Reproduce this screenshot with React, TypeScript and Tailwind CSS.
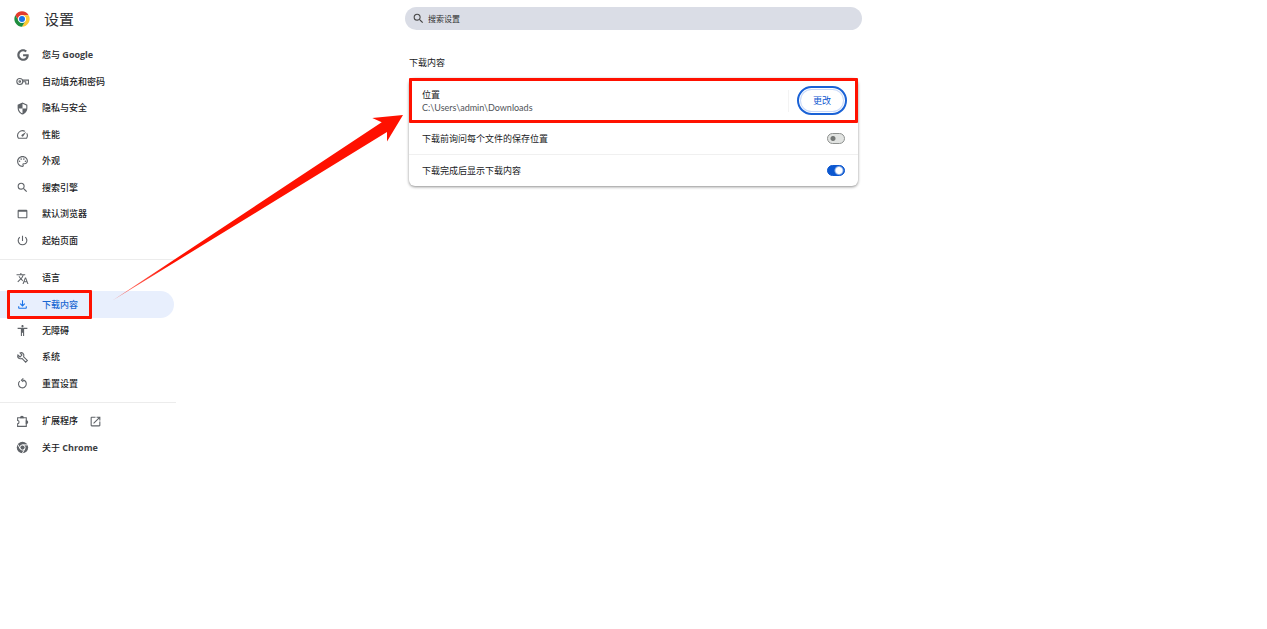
import { useState, type ReactNode } from "react";
import { FaGoogle } from "react-icons/fa";
import {
  MdAccessibility,
  MdOpenInNew,
  MdOutlineFileDownload,
  MdOutlinePalette,
  MdOutlineSpeed,
  MdOutlineWebAsset,
  MdPowerSettingsNew,
  MdSearch,
  MdSecurity,
  MdTranslate,
} from "react-icons/md";

type NavItem = {
  label: string;
  brand?: string;
  icon: ReactNode;
  active?: boolean;
  external?: boolean;
};

function StrokeIcon({ children }: { children: ReactNode }) {
  return (
    <svg
      viewBox="0 0 24 24"
      fill="none"
      stroke="currentColor"
      strokeWidth="2"
      className="size-[13px]"
    >
      {children}
    </svg>
  );
}

const browserItems: NavItem[] = [
  { label: "您与", brand: "Google", icon: <FaGoogle className="size-3" /> },
  {
    label: "自动填充和密码",
    icon: (
      <StrokeIcon>
        <circle cx="7" cy="12" r="5.500" />
        <circle cx="7" cy="12" r="1.500" />
        <path d="M12 9.500H23v7h-5v-4h-5.500" />
      </StrokeIcon>
    ),
  },
  {
    label: "隐私与安全",
    icon: <MdSecurity className="size-[13px] -scale-x-100" />,
  },
  { label: "性能", icon: <MdOutlineSpeed className="size-[13px]" /> },
  { label: "外观", icon: <MdOutlinePalette className="size-[13px]" /> },
  { label: "搜索引擎", icon: <MdSearch className="size-[13px]" /> },
  { label: "默认浏览器", icon: <MdOutlineWebAsset className="size-3.5" /> },
  { label: "起始页面", icon: <MdPowerSettingsNew className="size-[13px]" /> },
];

const advancedItems: NavItem[] = [
  { label: "语言", icon: <MdTranslate className="size-[13px]" /> },
  {
    label: "下载内容",
    active: true,
    icon: <MdOutlineFileDownload className="size-[13px]" />,
  },
  { label: "无障碍", icon: <MdAccessibility className="size-[13px]" /> },
  {
    label: "系统",
    icon: (
      <StrokeIcon>
        <path d="M7.500 3.500l3.500 4-3.500 3.500-4-3.500c-1 3 .5 5.500 3 6.500 1.500.5 3.200.4 4.500-.2l6.800 6.900 3.200-3.200-6.900-6.800c.9-2.300.4-4.700-1.100-6.200-1.500-1.500-3.500-1.800-5.500-1z" />
      </StrokeIcon>
    ),
  },
  {
    label: "重置设置",
    icon: (
      <StrokeIcon>
        <path d="M7 7.500A7.200 7.200 0 1 0 19 13c0-3.800-3-7-7-7.200" />
        <path d="M13.500 2.500L10 5.800l3.500 3.400" />
      </StrokeIcon>
    ),
  },
];

const moreItems: NavItem[] = [
  {
    label: "扩展程序",
    external: true,
    icon: (
      <StrokeIcon>
        <path d="M3 5h16v16H3v-5c3.500 0 3.500-6 0-6z" />
        <path
          d="M8.500 5a2.500 2.500 0 0 1 5 0zM19 10.500a2.500 2.500 0 0 1 0 5z"
          fill="currentColor"
        />
      </StrokeIcon>
    ),
  },
  {
    label: "关于",
    brand: "Chrome",
    icon: (
      <svg viewBox="0 0 24 24" className="size-[13px]">
        <circle cx="12" cy="12" r="10.500" fill="currentColor" />
        <g fill="none" stroke="#fff" strokeWidth="1.800">
          <circle cx="12" cy="12" r="4.800" />
          <path d="M12 7.200h10M7.800 14.400L3 6M16.200 14.400L11.500 23" />
        </g>
      </svg>
    ),
  },
];

function ChromeLogo() {
  return (
    <svg viewBox="0 0 48 48" className="size-4" aria-hidden="true">
      <circle cx="24" cy="24" r="23" fill="#fff" />
      <path d="M4.100 12.500A23 23 0 0 1 43.900 12.500H24A11.500 11.500 0 0 0 14 29.700z" fill="#e33b2e" />
      <path d="M43.900 12.500A23 23 0 0 1 24 47L34 29.700A11.500 11.500 0 0 0 24 12.500z" fill="#fcc934" />
      <path d="M24 47A23 23 0 0 1 4.100 12.500L14 29.700A11.500 11.500 0 0 0 34 29.700z" fill="#1e8e3e" />
      <circle cx="24" cy="24" r="11.500" fill="#fff" />
      <circle cx="24" cy="24" r="9" fill="#1a73e8" />
    </svg>
  );
}

function NavLink({ item }: { item: NavItem }) {
  return (
    <li className="grid">
      <a
        href="#"
        aria-current={item.active ? "page" : undefined}
        className={
          item.active
            ? "relative flex items-center gap-[13px] rounded-r-full bg-[#e8effd] pl-4 text-[#1967d2]"
            : "flex items-center gap-[13px] rounded-r-full pl-4 text-[#202124]"
        }
      >
        <span
          className={
            item.active
              ? "flex w-[13px] justify-center text-[#1a73e8]"
              : "flex w-[13px] justify-center text-[#5f6368]"
          }
        >
          {item.icon}
        </span>
        <span>
          {item.label}
          {item.brand && <b className="font-bold text-[#3c4043]"> {item.brand}</b>}
        </span>
        {item.external && (
          <MdOpenInNew className="-ml-0.5 size-[13px] text-[#5f6368]" />
        )}
        {item.active && (
          <span className="absolute -inset-y-px left-[7px] w-[85px] rounded-[1px] border-[3px] border-[#ff1100]" />
        )}
      </a>
    </li>
  );
}

function ToggleRow({
  label,
  defaultOn = false,
}: {
  label: string;
  defaultOn?: boolean;
}) {
  const [on, setOn] = useState(defaultOn);

  return (
    <label className="box-content flex h-[31px] items-center justify-between px-[13px]">
      {label}
      <input
        type="checkbox"
        role="switch"
        checked={on}
        onChange={() => setOn(!on)}
        className="h-[11px] w-[18px] appearance-none rounded-full border border-[#8e918f] bg-[#e1e3e1] bg-[radial-gradient(circle_at_5px_50%,#747775_2px,transparent_3px)] checked:border-[#0b57d0] checked:bg-[#0b57d0] checked:bg-[radial-gradient(circle_at_11px_50%,#fff_3px,transparent_5px)]"
      />
    </label>
  );
}

// Tapered pointer from the selected menu entry to the location row
function Arrow() {
  return (
    <svg
      viewBox="0 0 292 188"
      className="pointer-events-none absolute top-[114px] left-[112px] h-[188px] w-[292px]"
      aria-hidden="true"
    >
      <defs>
        <linearGradient id="tail" x1="0" x2="1">
          <stop offset="0" stopColor="#ff1100" stopOpacity="0.5" />
          <stop offset="0.2" stopColor="#ff1100" />
        </linearGradient>
      </defs>
      <path
        d="M0.500 186.500L269.700 8.300 260.300 4 291 1 275 27.500V18z"
        fill="url(#tail)"
      />
    </svg>
  );
}

export default function App() {
  return (
    <div className="relative grid min-h-screen grid-cols-[1fr_457px_1fr] bg-white font-['Open_Sans','Noto_Sans_CJK_SC',sans-serif] text-[9px] leading-3 text-[#202124]">
      <aside className="w-44">
        <header className="flex h-[42px] items-center gap-3.5 pb-1 pl-3.5">
          <ChromeLogo />
          <h1 className="text-[15px] leading-5 text-[#303236]">设置</h1>
        </header>
        <nav className="font-medium">
          <ul className="grid h-[212px] auto-rows-fr pr-0.5">
            {browserItems.map((item) => (
              <NavLink key={item.label} item={item} />
            ))}
          </ul>
          <hr className="my-[5px] border-[#ececec]" />
          <ul className="grid h-[132px] auto-rows-fr pr-0.5">
            {advancedItems.map((item) => (
              <NavLink key={item.label} item={item} />
            ))}
          </ul>
          <hr className="my-[5px] border-[#ececec]" />
          <ul className="grid h-[53px] auto-rows-fr pr-0.5">
            {moreItems.map((item) => (
              <NavLink key={item.label} item={item} />
            ))}
          </ul>
        </nav>
      </aside>

      <main className="pt-[7px]">
        <label className="flex h-[23px] items-center gap-[3px] rounded-full bg-[#dadde6] pl-[7px]">
          <MdSearch className="size-[13px] text-[#474747]" />
          <input
            type="search"
            aria-label="搜索设置"
            placeholder="搜索设置"
            className="flex-1 bg-transparent text-[8px] outline-none placeholder:text-[#303030]"
          />
        </label>

        <section className="px-1 pt-[27px]">
          <h2 className="mb-[9px] leading-3">下载内容</h2>
          <div className="rounded-md bg-white shadow-[0_1px_3px_rgba(0,0,0,0.45)]">
            <div className="flex h-[45px] items-center justify-between rounded-[1px] border-[3px] border-[#ff1100] pr-2 pl-[10px]">
              <div className="pt-px">
                <div>位置</div>
                <div className="mt-px font-['Lato','Noto_Sans_CJK_SC',sans-serif] text-[#4f5358]">
                  C:\Users\admin\Downloads
                </div>
              </div>
              <div className="flex items-center gap-2">
                <span className="h-[22px] w-px bg-[#f3f3f3]" />
                <button
                  type="button"
                  className="h-[29px] w-[50px] rounded-full border-2 border-[#1a62d6] text-[#0b57d0] shadow-[inset_0_0_0_1px_#fff,inset_0_0_0_2px_#c9dafa]"
                >
                  更改
                </button>
              </div>
            </div>
            <div className="divide-y divide-[#f0f0f0]">
              <ToggleRow label="下载前询问每个文件的保存位置" />
              <ToggleRow label="下载完成后显示下载内容" defaultOn />
            </div>
          </div>
        </section>
      </main>

      <Arrow />
    </div>
  );
}
